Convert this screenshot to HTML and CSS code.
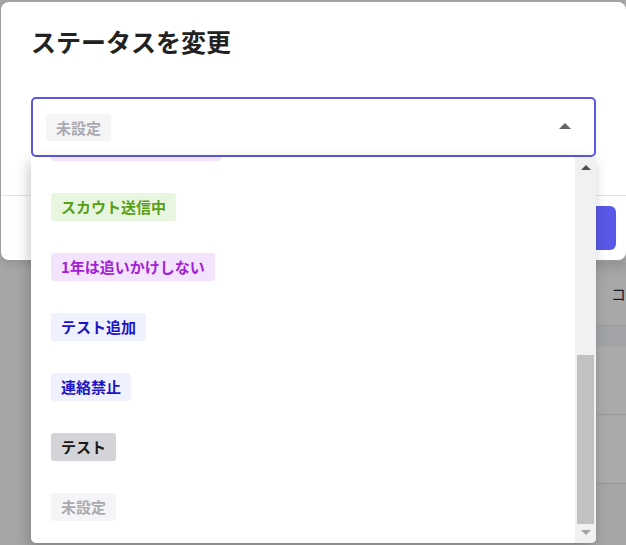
FILE: index.html
```html
<!DOCTYPE html>
<html lang="ja">
<head>
<meta charset="utf-8">
<title>ステータスを変更</title>
<link rel="stylesheet" href="styles.css">
</head>
<body>
<div class="page">
  <div class="page-head"><span class="page-title">コ</span></div>
  <div class="page-band"></div>
  <div class="page-row"></div>
  <div class="page-row"></div>
</div>

<div class="modal">
  <h2 class="modal-title">ステータスを変更</h2>
  <div class="select">
    <span class="tag tag-none">未設定</span>
    <span class="caret"></span>
  </div>
  <div class="modal-footer">
    <button class="btn-primary">変更する</button>
  </div>
</div>

<div class="menu">
  <ul class="menu-list">
    <li class="menu-item"><span class="tag tag-purple tag-partial"></span></li>
    <li class="menu-item"><span class="tag tag-green">スカウト送信中</span></li>
    <li class="menu-item"><span class="tag tag-purple">1年は追いかけしない</span></li>
    <li class="menu-item"><span class="tag tag-blue">テスト追加</span></li>
    <li class="menu-item"><span class="tag tag-blue">連絡禁止</span></li>
    <li class="menu-item"><span class="tag tag-grey">テスト</span></li>
    <li class="menu-item"><span class="tag tag-none">未設定</span></li>
  </ul>
  <div class="scrollbar">
    <span class="sb-up"></span>
    <span class="sb-thumb"></span>
    <span class="sb-down"></span>
  </div>
</div>
</body>
</html>
```

FILE: styles.css
```css
html, body {
  margin: 0;
  padding: 0;
  width: 626px;
  height: 545px;
  overflow: hidden;
}
body {
  background: #a6a6a9;
  font-family: "Noto Sans CJK JP", "Noto Sans", sans-serif;
  position: relative;
}

/* page behind the overlay */
.page {
  padding-top: 262px;
  margin-left: 575px;
}
.page-head {
  height: 63px;
  display: flex;
  align-items: center;
  padding-left: 36px;
  white-space: nowrap;
  background: linear-gradient(#9f9fa0, #a8a8a8 30%);
}
.page-title {
  font-size: 15px;
  color: #1a1a2e;
  font-weight: 400;
}
.page-band {
  height: 20px;
  background: #a2a3a8;
  border-top: 1px solid #9d9ea2;
}
.page-row {
  height: 68px;
  background: #aaaaaa;
  border-bottom: 1px solid #999999;
}

/* modal */
.modal {
  position: absolute;
  left: 1px;
  top: 2px;
  width: 625px;
  height: 258px;
  background: #ffffff;
  border-radius: 8px;
  display: flex;
  flex-direction: column;
  box-shadow: 0 4px 10px rgba(0,0,0,0.12);
}
.modal-title {
  margin: 0;
  padding: 19px 0 0 30px;
  font-size: 25px;
  line-height: 40px;
  font-weight: 700;
  color: #222222;
}
.select {
  margin: 36px 0 0 30px;
  width: 565px;
  height: 60px;
  box-sizing: border-box;
  border: 2px solid #5a57e6;
  border-radius: 5px;
  display: flex;
  align-items: center;
  padding: 0 23px 0 13px;
  justify-content: space-between;
}
.select .tag {
  line-height: 27px;
}
.caret {
  width: 0;
  height: 0;
  border-left: 6px solid transparent;
  border-right: 6px solid transparent;
  border-bottom: 6px solid #666666;
  margin-top: -2px;
}
.modal-footer {
  margin-top: 38px;
  border-top: 1px solid #e2e2e2;
  display: flex;
  justify-content: flex-end;
  padding: 10px 10px 0 0;
}
.btn-primary {
  height: 44px;
  width: 120px;
  border: none;
  border-radius: 6px;
  background: #5858e8;
  color: #ffffff;
  font-family: inherit;
  font-size: 15px;
  font-weight: 700;
}

/* tags */
.tag {
  display: inline-block;
  padding: 0 10px;
  border-radius: 3px;
  font-size: 15px;
  line-height: 28px;
  font-weight: 700;
  white-space: nowrap;
  vertical-align: top;
}
.tag-partial {
  width: 150px;
  height: 28px;
}
.tag-none { background: #f5f5f7; color: #a9a9b0; }
.tag-green { background: #e8f6df; color: #589f18; }
.tag-purple { background: #f4e3fc; color: #a11fd6; }
.tag-blue { background: #eff1ff; color: #1c14c6; }
.tag-grey { background: #d4d4d8; color: #18181b; }

/* dropdown menu */
.menu {
  position: absolute;
  left: 31px;
  top: 157px;
  width: 565px;
  height: 386px;
  background: #ffffff;
  border-radius: 0 0 5px 5px;
  overflow: hidden;
  box-shadow: -2px 5px 14px rgba(0,0,0,0.22);
}
.menu-list {
  list-style: none;
  margin: -40px 0 0 0;
  padding: 0;
}
.menu-item {
  padding: 16px 20px;
  height: 28px;
}
.scrollbar {
  position: absolute;
  top: 0;
  right: 0;
  bottom: 0;
  width: 21px;
  background: #f1f1f1;
}
.sb-up {
  position: absolute;
  top: 8px;
  left: 6px;
  width: 0;
  height: 0;
  border-left: 5px solid transparent;
  border-right: 5px solid transparent;
  border-bottom: 5px solid #505050;
}
.sb-thumb {
  position: absolute;
  top: 198px;
  left: 2px;
  width: 17px;
  height: 169px;
  background: #c1c1c1;
}
.sb-down {
  position: absolute;
  bottom: 8px;
  left: 6px;
  width: 0;
  height: 0;
  border-left: 5px solid transparent;
  border-right: 5px solid transparent;
  border-top: 5px solid #a3a3a3;
}
```
